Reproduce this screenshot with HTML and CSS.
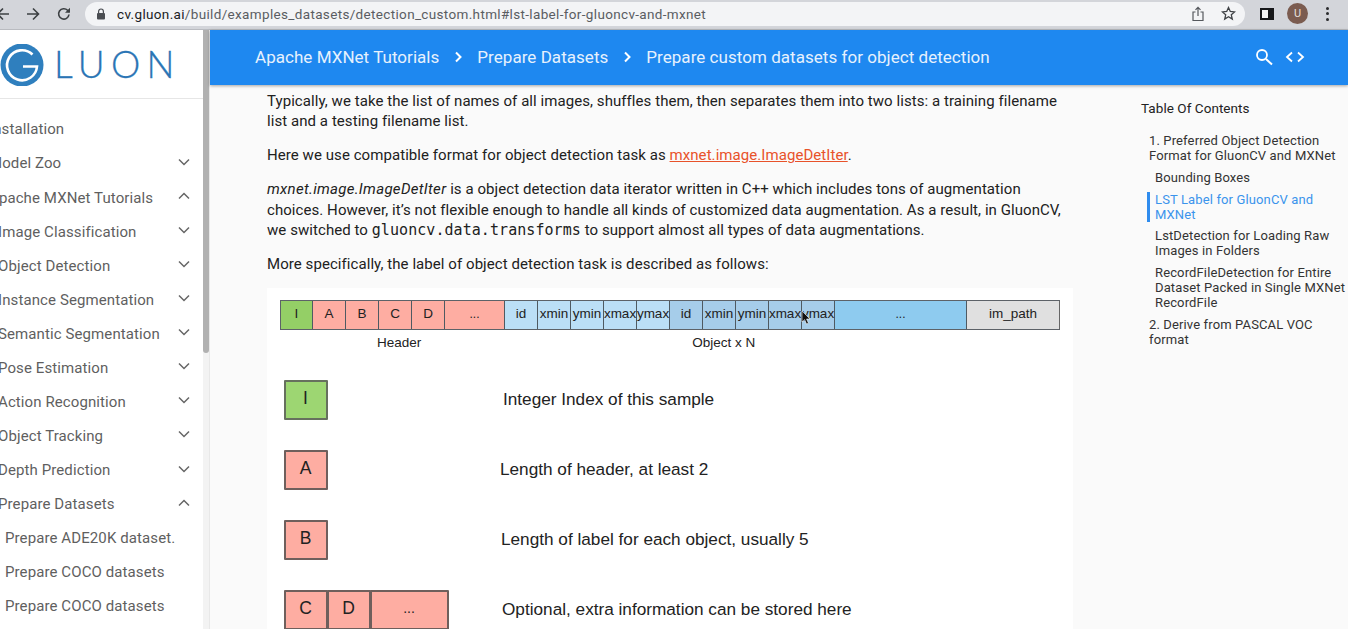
FILE: index.html
```html
<!DOCTYPE html>
<html lang="en">
<head>
<meta charset="utf-8">
<title>Prepare custom datasets for object detection</title>
<link rel="stylesheet" href="styles.css">
</head>
<body>
<div class="chrome">
  <svg class="nav-ic back" width="16" height="16" viewBox="0 0 16 16"><path d="M14 8H2.500M8 2.500 2.500 8 8 13.500" fill="none" stroke="#3c4043" stroke-width="1.600"/></svg>
  <svg class="nav-ic fwd" width="16" height="16" viewBox="0 0 16 16"><path d="M2 8h11.500M8 2.500 13.500 8 8 13.500" fill="none" stroke="#3c4043" stroke-width="1.600"/></svg>
  <svg class="nav-ic reload" width="16" height="16" viewBox="0 0 16 16"><path d="M13 8.500A5.200 5.200 0 1 1 11.600 4.300L13.200 6" fill="none" stroke="#3c4043" stroke-width="1.600"/><path d="M14 1.800V6.800H9Z" fill="#3c4043"/></svg>
  <div class="omnibox">
    <svg class="lock" width="10" height="12" viewBox="0 0 10 12"><path d="M2.600 5V3.400a2.400 2.400 0 0 1 4.800 0V5" fill="none" stroke="#4a4d52" stroke-width="1.200"/><rect x="1" y="5" width="8" height="6.400" rx="1" fill="#4a4d52"/></svg>
    <span class="url"><span class="host">cv.gluon.ai</span>/build/examples_datasets/detection_custom.html#lst-label-for-gluoncv-and-mxnet</span>
    <svg class="om-ic" width="14" height="16" viewBox="0 0 14 16"><path d="M4.500 6H2v8.500h10V6H9.500M7 10V1.500M4.500 3.800 7 1.300l2.500 2.500" fill="none" stroke="#55585d" stroke-width="1.200"/></svg>
    <svg class="om-ic star" width="15" height="15" viewBox="0 0 15 15"><path d="m7.500 1.500 1.800 4 4.300.4-3.300 2.900 1 4.300-3.800-2.300-3.800 2.300 1-4.300L1.400 5.900l4.300-.4Z" fill="none" stroke="#3f4246" stroke-width="1.300"/></svg>
  </div>
  <svg class="panel" width="14" height="12" viewBox="0 0 14 12"><rect x="1" y="1" width="12" height="10" fill="#f4f4f4" stroke="#17181a" stroke-width="2"/><rect x="8" y="1" width="5" height="10" fill="#17181a"/></svg>
  <div class="avatar">U</div>
  <div class="kebab"><i></i><i></i><i></i></div>
</div>

<div class="page">
  <aside class="sidebar">
    <div class="logo">
      <svg class="logo-mark" width="44" height="42" viewBox="0 0 44 42"><circle cx="22" cy="21" r="21.500" fill="#2f7fbe"/><path d="M32.500 10.500A15 15 0 1 0 37 22.500H23" fill="none" stroke="#fff" stroke-width="2.600"/></svg>
      <span class="logo-text">LUON</span>
    </div>
    <nav class="menu">
      <div class="item lvl1"><span>Installation</span></div>
      <div class="item lvl1"><span>Model Zoo</span><svg class="chev" width="12" height="8" viewBox="0 0 12 8"><path d="M1 1.500 6 6.500l5-5" /></svg></div>
      <div class="item lvl1"><span>Apache MXNet Tutorials</span><svg class="chev" width="12" height="8" viewBox="0 0 12 8"><path d="M1 6.500 6 1.500l5 5" /></svg></div>
      <div class="item lvl2"><span>Image Classification</span><svg class="chev" width="12" height="8" viewBox="0 0 12 8"><path d="M1 1.500 6 6.500l5-5" /></svg></div>
      <div class="item lvl2"><span>Object Detection</span><svg class="chev" width="12" height="8" viewBox="0 0 12 8"><path d="M1 1.500 6 6.500l5-5" /></svg></div>
      <div class="item lvl2"><span>Instance Segmentation</span><svg class="chev" width="12" height="8" viewBox="0 0 12 8"><path d="M1 1.500 6 6.500l5-5" /></svg></div>
      <div class="item lvl2"><span>Semantic Segmentation</span><svg class="chev" width="12" height="8" viewBox="0 0 12 8"><path d="M1 1.500 6 6.500l5-5" /></svg></div>
      <div class="item lvl2"><span>Pose Estimation</span><svg class="chev" width="12" height="8" viewBox="0 0 12 8"><path d="M1 1.500 6 6.500l5-5" /></svg></div>
      <div class="item lvl2"><span>Action Recognition</span><svg class="chev" width="12" height="8" viewBox="0 0 12 8"><path d="M1 1.500 6 6.500l5-5" /></svg></div>
      <div class="item lvl2"><span>Object Tracking</span><svg class="chev" width="12" height="8" viewBox="0 0 12 8"><path d="M1 1.500 6 6.500l5-5" /></svg></div>
      <div class="item lvl2"><span>Depth Prediction</span><svg class="chev" width="12" height="8" viewBox="0 0 12 8"><path d="M1 1.500 6 6.500l5-5" /></svg></div>
      <div class="item lvl2"><span>Prepare Datasets</span><svg class="chev" width="12" height="8" viewBox="0 0 12 8"><path d="M1 6.500 6 1.500l5 5" /></svg></div>
      <div class="item lvl3"><span>Prepare ADE20K dataset.</span></div>
      <div class="item lvl3"><span>Prepare COCO datasets</span></div>
      <div class="item lvl3"><span>Prepare COCO datasets</span></div>
    </nav>
  </aside>
  <div class="scrollbar"><div class="thumb"></div></div>
  <div class="right">
    <header class="topbar">
      <span>Apache MXNet Tutorials</span>
      <svg class="crumb" width="10" height="12" viewBox="0 0 10 12"><path d="m2 1.500 4.500 4.500L2 10.500"/></svg>
      <span>Prepare Datasets</span>
      <svg class="crumb" width="10" height="12" viewBox="0 0 10 12"><path d="m2 1.500 4.500 4.500L2 10.500"/></svg>
      <span>Prepare custom datasets for object detection</span>
      <svg class="search" width="18" height="18" viewBox="0 0 18 18"><circle cx="7" cy="7" r="5" fill="none" stroke="#fff" stroke-width="1.800"/><path d="m11 11 6 5.500" stroke="#fff" stroke-width="2"/></svg>
      <svg class="code" width="20" height="12" viewBox="0 0 20 12"><path d="M7 1.500 2 6l5 4.500M13 1.500 18 6l-5 4.500" fill="none" stroke="#fff" stroke-width="1.800"/></svg>
    </header>
    <div class="body">
      <main class="content">
        <p>Typically, we take the list of names of all images, shuffles them, then separates them into two lists: a training filename list and a testing filename list.</p>
        <p>Here we use compatible format for object detection task as <a class="link" href="#">mxnet.image.ImageDetIter</a>.</p>
        <p><em>mxnet.image.ImageDetIter</em> is a object detection data iterator written in C++ which includes tons of augmentation choices. However, it’s not flexible enough to handle all kinds of customized data augmentation. As a result, in GluonCV, we switched to <code>gluoncv.data.transforms</code> to support almost all types of data augmentations.</p>
        <p>More specifically, the label of object detection task is described as follows:</p>
        <div class="figure">
          <div class="bar">
            <div class="cell green w33">I</div>
            <div class="cell red w33">A</div><div class="cell red w33">B</div><div class="cell red w33">C</div><div class="cell red w33">D</div><div class="cell red w60 dots">...</div>
            <div class="cell blue1 w33">id</div><div class="cell blue1 w33">xmin</div><div class="cell blue1 w33">ymin</div><div class="cell blue1 w33">xmax</div><div class="cell blue1 w33">ymax</div>
            <div class="cell blue2 w33">id</div><div class="cell blue2 w33">xmin</div><div class="cell blue2 w33">ymin</div><div class="cell blue2 w33">xmax</div><div class="cell blue2 w33">ymax</div>
            <div class="cell blue3 w132 dots">...</div>
            <div class="cell gray w93">im_path</div>
          </div>
          <div class="bar-labels"><span class="lab-header">Header</span><span class="lab-object">Object x N</span></div>
          <div class="legend">
            <div class="row"><div class="boxes"><div class="box green">I</div></div><div class="desc d1">Integer Index of this sample</div></div>
            <div class="row"><div class="boxes"><div class="box red">A</div></div><div class="desc d2">Length of header, at least 2</div></div>
            <div class="row"><div class="boxes"><div class="box red">B</div></div><div class="desc d3">Length of label for each object, usually 5</div></div>
            <div class="row"><div class="boxes"><div class="box red">C</div><div class="box red">D</div><div class="box red wide">...</div></div><div class="desc d4">Optional, extra information can be stored here</div></div>
          </div>
        </div>
      </main>
      <aside class="toc">
        <div class="toc-title">Table Of Contents</div>
        <ol class="toc-list">
          <li>1. Preferred Object Detection Format for GluonCV and MXNet</li>
          <li class="sub">Bounding Boxes</li>
          <li class="sub active">LST Label for GluonCV and MXNet</li>
          <li class="sub">LstDetection for Loading Raw Images in Folders</li>
          <li class="sub">RecordFileDetection for Entire Dataset Packed in Single MXNet RecordFile</li>
          <li>2. Derive from PASCAL VOC format</li>
        </ol>
      </aside>
    </div>
  </div>
</div>
<svg class="cursor" width="10" height="15" viewBox="0 0 10 15"><path d="M1 1v11l2.600-2.400L5.500 14l2-.8-1.900-4.200H9Z" fill="#111" stroke="#fff" stroke-width=".6"/></svg>
</body>
</html>
```
FILE: styles.css
```css
* { box-sizing: border-box; }
html, body { margin: 0; height: 629px; overflow: hidden; }
body { font-family: Roboto, "Liberation Sans", sans-serif; background: #fafafa; color: #222; position: relative; }

.chrome { height: 30px; background: #d3d5da; display: flex; align-items: center; border-bottom: 1px solid #b9bbc0; padding-bottom: 2px; }
.nav-ic { flex: none; }
.back { margin-left: -5px; }
.fwd { margin-left: 14px; }
.reload { margin-left: 15px; }
.omnibox { margin-left: 13px; width: 1160px; height: 24px; background: #f3f4f6; border-radius: 12px; display: flex; align-items: center; padding: 0 9px 0 11px; flex: none; }
.lock { margin-right: 11px; flex: none; }
.url { font-size: 13.500px; color: #5a5d62; flex: 1; letter-spacing: .34px; white-space: nowrap; }
.host { color: #202124; }
.om-ic { flex: none; }
.star { margin-left: 16px; }
.panel { margin-left: 15px; flex: none; }
.avatar { margin-left: 13px; width: 21px; height: 21px; border-radius: 50%; background: #7b5c50; color: #e9e0dc; font-size: 11px; display: flex; align-items: center; justify-content: center; flex: none; }
.kebab { margin-left: 18px; display: flex; flex-direction: column; gap: 2.500px; }
.kebab i { width: 3px; height: 3px; border-radius: 50%; background: #2a2b2d; display: block; }

.page { display: flex; height: 599px; }
.sidebar { width: 203px; flex: none; background: #fff; overflow: hidden; }
.logo { height: 69px; border-bottom: 1px solid #e6e6e6; display: flex; align-items: center; }
.logo-mark { flex: none; margin-top: 1px; }
.logo-text { font-family: Lato, sans-serif; font-weight: 300; font-size: 37px; letter-spacing: 6.300px; color: #2a75b5; margin-left: 10px; line-height: 1; margin-top: -1px; -webkit-text-stroke: .3px #2a75b5; }
.menu { padding-top: 13.400px; }
.item { height: 34.070px; display: flex; align-items: center; justify-content: space-between; font-size: 15px; color: #5f5f5f; white-space: nowrap; padding-right: 13px; letter-spacing: .1px; }
.lvl1 { margin-left: -11px; }
.lvl2 { margin-left: -2px; }
.lvl3 { margin-left: 5px; }
.chev { fill: none; stroke: #666; stroke-width: 1.500; margin-top: -3px; flex: none; }

.scrollbar { width: 7px; flex: none; background: #f3f3f3; border-right: 1px solid #e8e8e8; }
.thumb { width: 6px; height: 323px; background: #b1b1b1; border-radius: 0 0 3px 3px; }

.right { flex: 1; min-width: 0; display: flex; flex-direction: column; }
.topbar { height: 55px; flex: none; background: #1e88f0; color: #e6f1fd; display: flex; align-items: center; padding: 0 0 2px 45px; font-size: 17px; box-shadow: 0 1px 3px rgba(0,0,0,.35); letter-spacing: .04px; position: relative; }
.crumb { fill: none; stroke: #fff; stroke-width: 2; margin: 0 13px 0 15px; flex: none; }
.search { margin-left: auto; flex: none; }
.code { margin-left: 12px; margin-right: 43px; flex: none; }

.body { display: flex; flex: 1; min-height: 0; }
.content { width: 806px; margin-left: 57px; flex: none; font-size: 15px; line-height: 20.500px; color: #212121; padding-top: 5.500px; letter-spacing: .065px; }
.content p { margin: 0 0 13.500px; }
.content em { letter-spacing: .3px; }
.link { color: #e8522a; }
code { font-family: "DejaVu Sans Mono", monospace; font-size: 15px; letter-spacing: .06px; }

.figure { background: #fff; height: 341px; margin-top: 12px; padding: 12px 13px 0; }
.bar { display: flex; height: 30px; border: 1px solid #5d6268; border-left: 0; border-right: 0; }
.cell { height: 100%; border-right: 1px solid #4f5a62; flex: none; display: flex; align-items: center; justify-content: center; font-family: "Liberation Sans", sans-serif; font-size: 13.500px; letter-spacing: 0; color: #222; padding-bottom: 2px; white-space: nowrap; }
.cell:first-child { border-left: 1px solid #5d6268; }
.dots { font-size: 12px; }
.w33 { width: 33px; }
.w60 { width: 60px; }
.w93 { width: 93px; border-right-color: #666; }
.w132 { width: 132px; }
.green { background: #94cf66; }
.red { background: #feada2; }
.blue1 { background: #bbdff6; }
.blue2 { background: #a6cdea; }
.blue3 { background: #8ecbef; }
.gray { background: #e0e0e0; }
.bar-labels { height: 50px; font-family: "Liberation Sans", sans-serif; font-size: 13.500px; letter-spacing: 0; color: #222; display: flex; padding-top: 5px; line-height: 16px; }
.lab-header { margin-left: 97px; }
.lab-object { margin-left: 271px; }
.legend { display: flex; flex-direction: column; gap: 30px; }
.row { height: 40px; display: flex; align-items: center; }
.boxes { display: flex; width: 216px; padding-left: 3.500px; height: 40px; flex: none; }
.box { width: 44px; height: 40px; border: 2px solid #6f5f5c; border-radius: 1px; display: flex; align-items: center; justify-content: center; font-family: "Liberation Sans", sans-serif; font-size: 17.500px; letter-spacing: 0; color: #222; padding-bottom: 4px; margin-right: -1px; }
.box.green { background: #9dd672; border-color: #66705e; }
.wide { width: 79px; font-size: 14px; }
.desc { font-family: "Liberation Sans", sans-serif; font-size: 17.200px; letter-spacing: 0; color: #222; white-space: nowrap; padding-bottom: 1px; }
.d1 { margin-left: 7px; }
.d2 { margin-left: 4px; }
.d3 { margin-left: 5px; }
.d4 { margin-left: 6px; }

.toc { margin-left: 68px; padding-top: 15px; font-size: 13px; line-height: 15px; color: #333; flex: 1; min-width: 0; letter-spacing: .13px; }
.toc-title { font-size: 13.500px; color: #222; line-height: 16px; margin-bottom: 17px; letter-spacing: .05px; }
.toc-list { list-style: none; margin: 0; padding: 0 0 0 8px; }
.toc-list li { margin-bottom: 6.800px; }
.toc-list .sub { margin-left: -2px; padding-left: 5px; border-left: 3px solid transparent; }
.toc-list .active { color: #3a94ec; border-left-color: #2f8cee; }

.cursor { position: absolute; left: 801px; top: 310px; }
```
